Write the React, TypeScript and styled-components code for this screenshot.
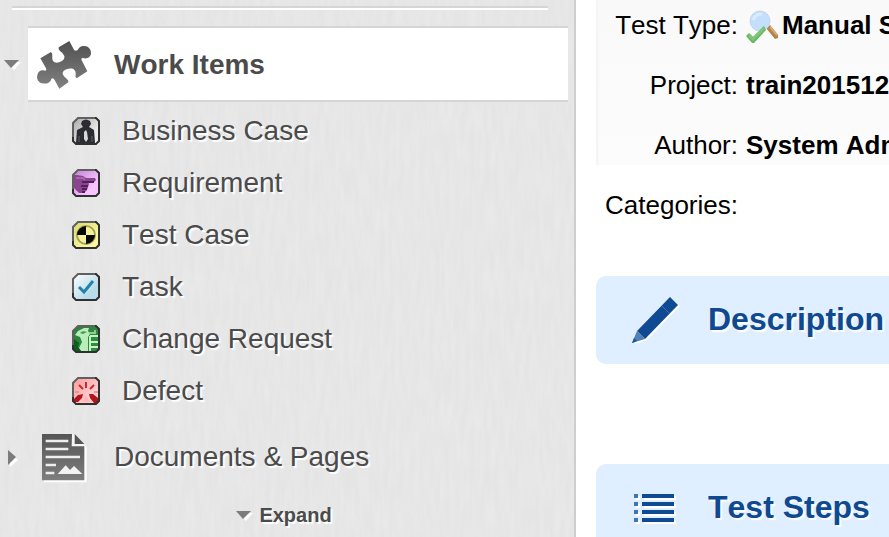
import React from "react";
import styled, { createGlobalStyle } from "styled-components";

const grain = `url("data:image/svg+xml,${encodeURIComponent(
  `<svg xmlns='http://www.w3.org/2000/svg' width='300' height='300'><filter id='g' x='0' y='0' width='100%' height='100%'><feTurbulence type='fractalNoise' baseFrequency='0.2 0.03' numOctaves='2' stitchTiles='stitch'/><feColorMatrix values='0 0 0 0 1  0 0 0 0 1  0 0 0 0 1  0.3 0 0 0 -0.06'/></filter><rect width='300' height='300' filter='url(#g)'/></svg>`
)}")`;

const GlobalStyle = createGlobalStyle`
  * { box-sizing: border-box; }
  html, body { height: 100%; }
  body {
    margin: 0;
    overflow: hidden;
    background: #fff;
    font-family: "Liberation Sans", Arial, sans-serif;
    font-kerning: none;
  }
  #root { height: 100%; }
`;

const Page = styled.div`
  display: flex;
  height: 100%;
`;

const Sidebar = styled.nav`
  flex: 0 0 576px;
  padding: 6px 6px 0 0;
  border-right: 2px solid #cecece;
  background: ${grain} #e4e4e4;
  color: #4b4b4b;
  overflow: hidden;
`;

const Divider = styled.hr`
  height: 4px;
  margin: 0 20px 16px 12px;
  border: 0;
  border-top: 2px solid #d5d5d5;
  background: #fff;
`;

const TopicRow = styled.div`
  display: flex;
  align-items: center;
`;

const Toggle = styled.button`
  display: flex;
  flex: 0 0 28px;
  align-items: center;
  justify-content: center;
  height: 28px;
  padding: 0 5px 0 0;
  border: 0;
  background: none;
  cursor: pointer;
`;

const TopicLink = styled.a<{ $active?: boolean }>`
  display: flex;
  flex: 1;
  align-items: center;
  height: ${(p) => (p.$active ? 76 : 80)}px;
  padding: ${(p) => (p.$active ? "2px 0 0 8px" : "0 0 0 8px")};
  border: solid #d5d5d5;
  border-width: ${(p) => (p.$active ? "2px 0" : "0")};
  background: ${(p) => (p.$active ? "#fff" : "transparent")};
  color: inherit;
  font-size: 28px;
  line-height: 32px;
  font-weight: ${(p) => (p.$active ? "bold" : "normal")};
  text-decoration: none;
  text-shadow: 2px 2px 1px #fff;
`;

const TopicIcon = styled.span<{ $inset?: boolean }>`
  display: flex;
  flex: 0 0 78px;
  padding-left: ${(p) => (p.$inset ? 6 : 0)}px;
`;

const TypeList = styled.ul`
  margin: 0;
  padding: 3px 0 0 72px;
  list-style: none;
`;

const TypeLink = styled.a`
  display: flex;
  align-items: center;
  gap: 22px;
  height: 52px;
  color: inherit;
  font-size: 28px;
  line-height: 32px;
  text-decoration: none;
  text-shadow: 2px 2px 1px #fff;
`;

const ExpandButton = styled.button`
  display: flex;
  align-items: center;
  gap: 8px;
  height: 36px;
  margin: 0 auto;
  padding: 0;
  border: 0;
  background: none;
  color: inherit;
  font: bold 20px/24px "Liberation Sans", Arial, sans-serif;
  text-shadow: 2px 2px 1px #fff;
  cursor: pointer;
`;

const Main = styled.main`
  flex: 1;
  min-width: 0;
  padding-left: 20px;
  overflow: hidden;
`;

const Fields = styled.dl`
  margin: 0 0 41px;
  background: linear-gradient(90deg, #f5f5f5 2px, transparent 3px) 0 0 / 100% 165px no-repeat,
    linear-gradient(#f9f9f9, #fcfcfc) 0 0 / 100% 165px no-repeat;
`;

const Field = styled.div`
  display: grid;
  grid-template-columns: 142px 1fr;
  column-gap: 8px;
  align-items: center;
  height: 60px;
  font-size: 26px;
  line-height: 32px;
  white-space: nowrap;
  color: #000;

  &:first-child {
    height: 55px;
    padding-bottom: 5px;
  }
`;

const Label = styled.dt`
  text-align: right;
`;

const Value = styled.dd`
  display: flex;
  align-items: center;
  gap: 4px;
  margin: 0;
  min-width: 0;
  font-weight: bold;
`;

const ValueIcon = styled.span`
  display: flex;
  height: 32px;
  padding-top: 2px;
`;

const Section = styled.section`
  display: flex;
  align-items: center;
  height: 88px;
  margin-bottom: 100px;
  padding-left: 36px;
  border-radius: 10px 0 0 10px;
  background: #e0efff;
`;

const SectionIcon = styled.span`
  display: flex;
  flex: 0 0 76px;
`;

const SectionTitle = styled.h2`
  margin: 0;
  padding-bottom: 2px;
  color: #0f4a91;
  font-size: 32px;
  line-height: 36px;
  white-space: nowrap;
  text-shadow: 2px 2px 1px #fff;
`;

const Drawing = styled.svg`
  display: block;
  flex: none;
  overflow: visible;
`;

const Caret = ({ right = false }: { right?: boolean }) => (
  <Drawing width={right ? 8 : 15} height={right ? 15 : 8} aria-hidden="true">
    <path d={right ? "M2 3 10 10 2 17z" : "M2 2H17L10 10z"} fill="#fff" />
    <path d={right ? "M0 0 8 7 0 15z" : "M0 0H15L7 8z"} fill="#7c7c7c" />
  </Drawing>
);

const Puzzle = () => (
  <Drawing width="56" height="50" viewBox="108 120 168 150" aria-hidden="true">
    <defs>
      <linearGradient id="puzzle" x2="0" y2="1">
        <stop stopColor="#505050" />
        <stop offset="1" stopColor="#818181" />
      </linearGradient>
    </defs>
    <path
      fill="url(#puzzle)"
      d="M121 175 153 156Q158 160 157 169Q155 183 164 187Q173 191 184 184Q195 178 193 168Q191 160 180 153Q174 148 176 142L208 123 222 149Q226 155 233 150Q239 138 250 138C263 136 274 147 273 160C272 173 260 178 249 174Q242 174 245 181L262 214 230 235Q225 231 227 221C228 209 218 203 207 206C193 208 184 216 190 226Q193 232 200 236Q207 241 205 247L178 266 164 240Q160 233 154 236C152 248 138 253 127 250C114 248 109 236 112 225C114 213 125 208 134 212Q141 213 138 205Z"
    />
  </Drawing>
);

const DocumentIcon = () => (
  <Drawing width="43" height="47" viewBox="126 42 129 141" aria-hidden="true">
    <defs>
      <linearGradient id="doc" x2="0" y2="1">
        <stop stopColor="#555" />
        <stop offset="1" stopColor="#7e7e7e" />
      </linearGradient>
    </defs>
    <path d="M132 48H222L260 80V187H132Z" fill="#fff" />
    <path d="M126 42H216V78H253V181H126Z" fill="url(#doc)" />
    <path d="M216 42H224V70H253V79H215Z" fill="#f5f5f5" />
    <path d="M224 42 253 72H224Z" fill="#555" />
    <path d="M137 63H205M137 87H205M137 111H240M137 135H168M137 159H163" stroke="#eee" strokeWidth="7" />
    <path d="M173 162 197 136 210 150 222 138 247 162Z" fill="#f3f3f3" />
  </Drawing>
);

type ItemType = "business" | "requirement" | "test" | "task" | "change" | "defect";

const tints: Record<ItemType, [string, string]> = {
  business: ["#a9a9a9", "#ececec"],
  requirement: ["#c47fd2", "#f6c4ff"],
  test: ["#dcd96c", "#f8f6a0"],
  task: ["#ffffff", "#b9dcea"],
  change: ["#2c7f38", "#2e8b43"],
  defect: ["#ff9a9a", "#ffcfcf"],
};

const glyphs: Record<ItemType, React.ReactNode> = {
  business: (
    <>
      <path d="M10 4Q14 1 18 4L19 7 17 10 22 13 23 26H4L5 13 11 10 9 7Z" fill="#2b2c31" />
      <path d="M12 15 14 13 15 15 16 22 14 25 12 22Z" fill="#d8d8d8" />
      <path d="M7 19V25M20 19V25" stroke="#626266" />
    </>
  ),
  requirement: (
    <>
      <path d="M1 6 5 6 11 7 14 9H23L24 11 22 13H16L17 15 16 18 15 21 12 24H7L1 18Z" fill="#8a4590" />
      <path d="M10 13H22M9 17H16M10 20H15M10 23H13" stroke="#54205a" strokeWidth="2" />
      <path d="M4 9 11 9 13 11" stroke="#aa65b0" strokeWidth="2" fill="none" />
    </>
  ),
  test: (
    <>
      <circle cx="14" cy="14" r="9" fill="#f5f29a" stroke="#a5a25a" strokeWidth="2" />
      <path d="M14 14V5A9 9 0 0 0 5 14ZM14 14V23A9 9 0 0 0 23 14Z" fill="#080804" />
    </>
  ),
  task: <path d="M7 14 12 19 21 8" fill="none" stroke="#2482aa" strokeWidth="3" />,
  change: (
    <>
      <path d="M3 10 6 6 12 3H17L16 6 18 9 16 12V26H9L7 23 10 17 8 12Z" fill="#b9edb9" />
      <path d="M8 8Q10 5 15 7L11 9Z" fill="#4b9a55" />
      <path d="M18 11H26M18 11V26M18 17H26M18 22H26" stroke="#c6f3c4" strokeWidth="2" fill="none" />
      <path d="M17 8H23V5" stroke="#8ccf8e" strokeWidth="2" fill="none" />
      <path d="M2 14 7 18 6 22 9 26H2Z" fill="#0f5c1e" />
    </>
  ),
  defect: (
    <>
      <path d="M14 5V11M7 8 11 12M22 8 18 12" stroke="#c92b34" strokeWidth="2" />
      <path d="M11 17 10 21 6 25H2V22L6 18ZM17 17H21L26 21V26H22L18 21Z" fill="#b4141c" />
      <path d="M3 15H7M22 15H26" stroke="#f29090" strokeWidth="2" />
      <path d="M10 25 14 18 18 25Z" fill="#ffb5b5" />
    </>
  ),
};

const TypeIcon = ({ type }: { type: ItemType }) => (
  <Drawing width="28" height="28" viewBox="0 0 28 28" aria-hidden="true">
    <defs>
      <linearGradient id={`tint-${type}`} x2="1" y2="1">
        <stop stopColor={tints[type][0]} />
        <stop offset="0.7" stopColor={tints[type][1]} />
      </linearGradient>
    </defs>
    <path d="M1 6 6 1H24L27 4V25L25 27H4L1 25Z" fill={`url(#tint-${type})`} />
    {glyphs[type]}
    <path d="M1 24V6L6 1H24" fill="none" stroke="#606060" strokeWidth="2" />
    <path d="M23 1H24L27 4V24L24 27H4L1 24V20" fill="none" stroke="#303030" strokeWidth="2" />
  </Drawing>
);

const ManualTestIcon = () => (
  <Drawing width="32" height="32" viewBox="0 0 32 32" aria-hidden="true">
    <path d="M20 17 24 14 32 24V27L29 28Z" fill="#b68147" />
    <path d="M24 16 31 24" stroke="#d8aa70" strokeWidth="2" />
    <circle cx="14" cy="10" r="10" fill="#c3dffb" stroke="#c2d6ee" />
    <path d="M7 9Q9 3 16 3" fill="none" stroke="#dcecfd" strokeWidth="3" />
    <path d="M0 25 3 22 7 26 18 15 20 19 8 32H6Z" fill="#66b75f" />
    <path d="M3 24 7 28 18 17" fill="none" stroke="#7cc775" strokeWidth="3" />
  </Drawing>
);

const Pencil = () => (
  <Drawing width="46" height="46" viewBox="0 0 46 46" aria-hidden="true">
    <path d="M40 2 48 9 15 43 3 47 7 34Z" fill="#fff" />
    <path d="M5 34 38 0 46 8 13 42Z" fill="#0f4b93" />
    <path d="M5 34 0 46 13 42Z" fill="#527fb4" />
    <path d="M0 46 2 41 5 44Z" fill="#1b579b" />
    <path d="M30 9 37 16" stroke="#3f73ad" strokeWidth="1" />
  </Drawing>
);

const Steps = () => (
  <Drawing width="44" height="28" viewBox="0 0 44 28" aria-hidden="true">
    <path d="M4 4H8M4 12H8M4 20H8M4 28H8M12 4H44M12 12H44M12 20H44M12 28H44" stroke="#fff" strokeWidth="4" />
    <path d="M2 2H6M2 10H6M2 18H6M2 26H6" stroke="#4175b0" strokeWidth="4" />
    <path d="M10 2H42M10 10H42M10 18H42M10 26H42" stroke="#0f4b93" strokeWidth="4" />
  </Drawing>
);

const itemTypes: { type: ItemType; name: string }[] = [
  { type: "business", name: "Business Case" },
  { type: "requirement", name: "Requirement" },
  { type: "test", name: "Test Case" },
  { type: "task", name: "Task" },
  { type: "change", name: "Change Request" },
  { type: "defect", name: "Defect" },
];

export default function App() {
  return (
    <>
      <GlobalStyle />
      <Page>
        <Sidebar>
          <Divider />
          <TopicRow>
            <Toggle aria-label="Collapse Work Items"><Caret /></Toggle>
            <TopicLink href="#work-items" $active>
              <TopicIcon><Puzzle /></TopicIcon>
              Work Items
            </TopicLink>
          </TopicRow>
          <TypeList>
            {itemTypes.map(({ type, name }) => (
              <li key={type}>
                <TypeLink href={`#${type}`}><TypeIcon type={type} />{name}</TypeLink>
              </li>
            ))}
          </TypeList>
          <TopicRow>
            <Toggle aria-label="Open Documents & Pages"><Caret right /></Toggle>
            <TopicLink href="#documents">
              <TopicIcon $inset><DocumentIcon /></TopicIcon>
              Documents &amp; Pages
            </TopicLink>
          </TopicRow>
          <ExpandButton><Caret />Expand</ExpandButton>
        </Sidebar>
        <Main>
          <Fields>
            <Field>
              <Label>Test Type:</Label>
              <Value><ValueIcon><ManualTestIcon /></ValueIcon>Manual Steps</Value>
            </Field>
            <Field><Label>Project:</Label><Value>train201512</Value></Field>
            <Field><Label>Author:</Label><Value>System Administrator</Value></Field>
            <Field><Label>Categories:</Label><Value /></Field>
          </Fields>
          <Section>
            <SectionIcon><Pencil /></SectionIcon>
            <SectionTitle>Description</SectionTitle>
          </Section>
          <Section>
            <SectionIcon><Steps /></SectionIcon>
            <SectionTitle>Test Steps</SectionTitle>
          </Section>
        </Main>
      </Page>
    </>
  );
}
